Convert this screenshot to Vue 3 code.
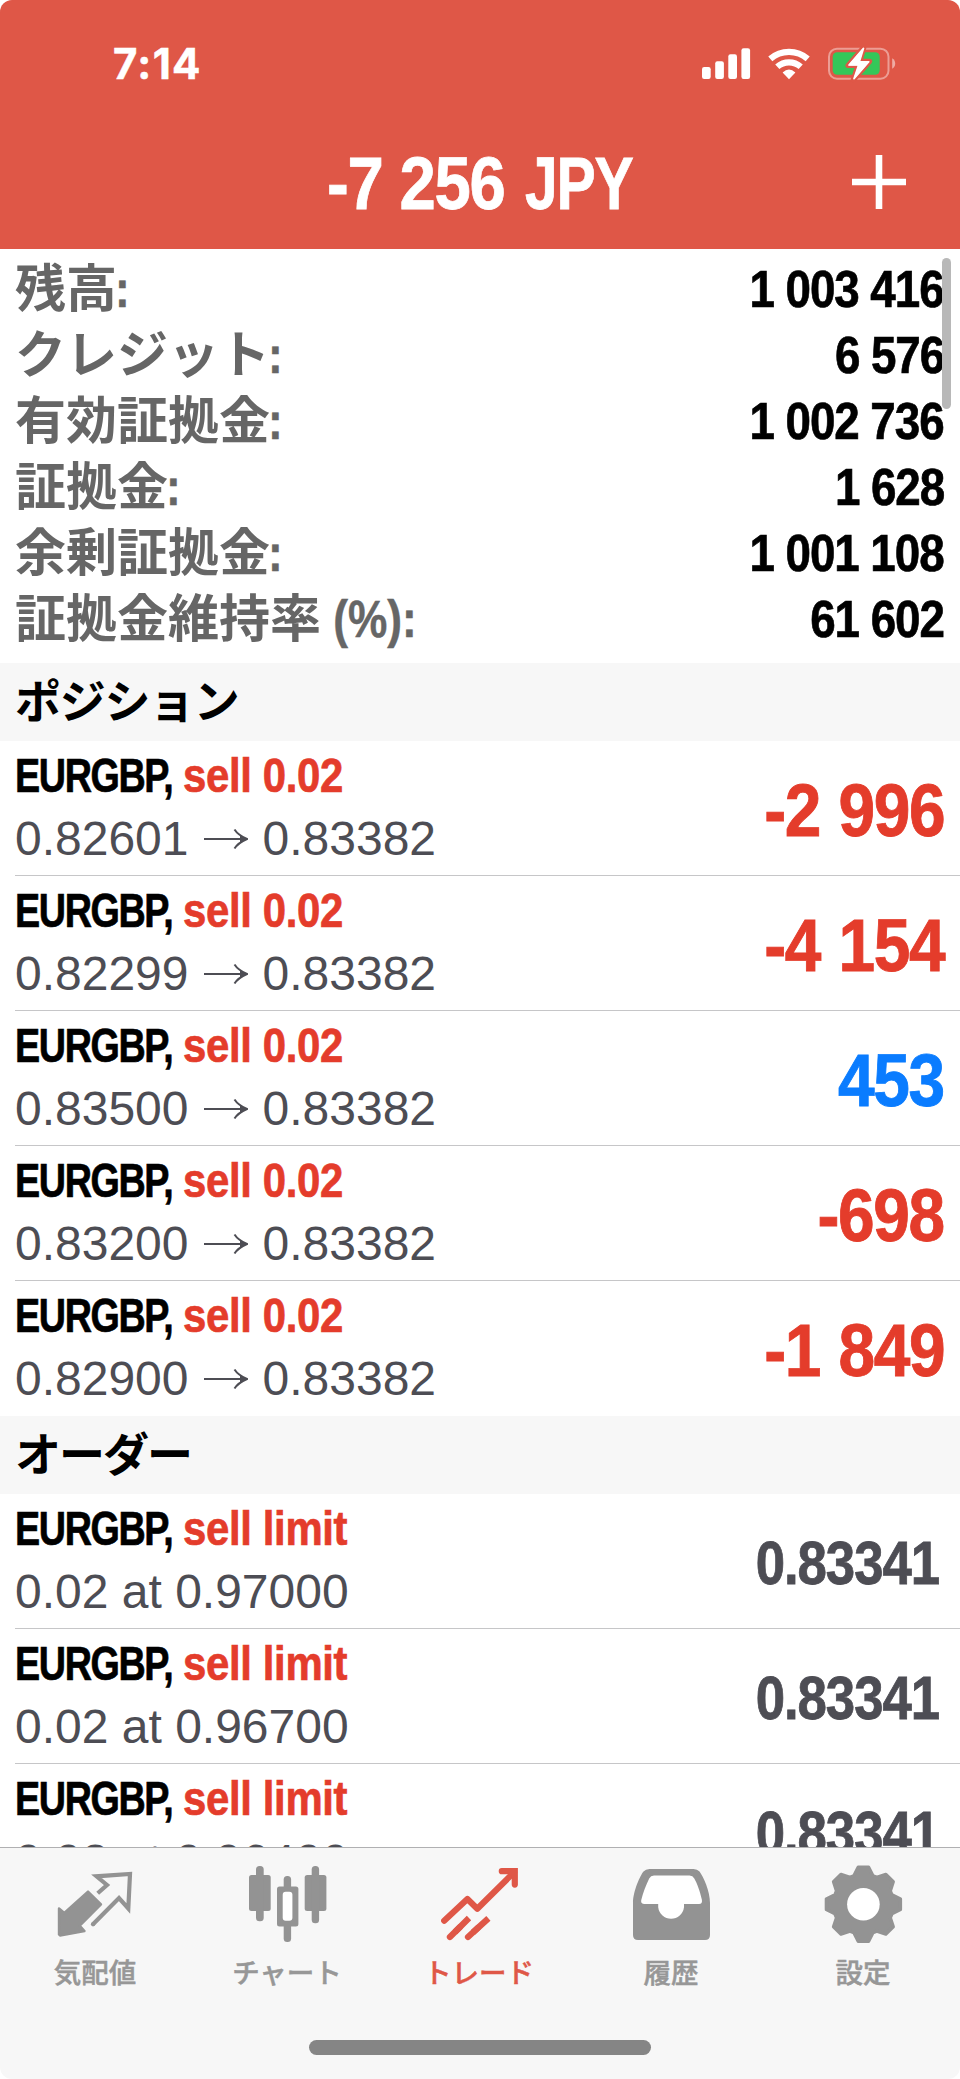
<script setup>
const account = [
  { label: '残高', value: '1 003 416' },
  { label: 'クレジット', value: '6 576' },
  { label: '有効証拠金', value: '1 002 736' },
  { label: '証拠金', value: '1 628' },
  { label: '余剰証拠金', value: '1 001 108' },
  { label: '証拠金維持率', unit: ' (%)', value: '61 602' },
]

const positions = [
  { open: '0.82601', now: '0.83382', profit: '-2 996' },
  { open: '0.82299', now: '0.83382', profit: '-4 154' },
  { open: '0.83500', now: '0.83382', profit: '453' },
  { open: '0.83200', now: '0.83382', profit: '-698' },
  { open: '0.82900', now: '0.83382', profit: '-1 849' },
]

const orders = [
  { at: '0.97000', price: '0.83341' },
  { at: '0.96700', price: '0.83341' },
  { at: '0.96400', price: '0.83341' },
]

// Eight-toothed gear outline around (0, 0)
const tooth = [[-9.5, -28.5], [-5.2, -37], [5.2, -37], [9.5, -28.5]]
const gear = Array.from({ length: 8 }, (_, i) => {
  const a = (i * Math.PI) / 4
  return tooth
    .map(([x, y]) => `${(x * Math.cos(a) - y * Math.sin(a)).toFixed(2)},${(x * Math.sin(a) + y * Math.cos(a)).toFixed(2)}`)
    .join(' ')
}).join(' ')
</script>

<template>
  <div class="screen">
    <header class="top">
      <div class="status">
        <span class="time">7:14</span>
        <svg class="indicators" width="200" height="40" viewBox="700 44 200 40">
          <g fill="#fff">
            <rect x="702" y="67" width="8.7" height="12" rx="2.2" />
            <rect x="715.2" y="61.3" width="8.7" height="17.7" rx="2.2" />
            <rect x="728.3" y="54.3" width="8.7" height="24.7" rx="2.2" />
            <rect x="741.4" y="48.3" width="8.7" height="30.7" rx="2.2" />
            <path d="M789 79.2L782.6 72.6Q789 66.6 795.4 72.6Z" />
          </g>
          <g fill="none" stroke="#fff" stroke-width="6.2">
            <path d="M770.3 58.8A28.5 28.5 0 0 1 807.7 58.8" />
            <path d="M777.3 66.8A17.5 17.5 0 0 1 800.7 66.8" />
          </g>
          <rect x="829" y="48.7" width="59.5" height="30" rx="8" fill="none" stroke="#fff" stroke-opacity=".42" stroke-width="2" />
          <rect x="832.7" y="52.3" width="47" height="22.4" rx="4.5" fill="#34c759" />
          <path d="M892.2 58.2Q895.2 60 895.2 63.5T892.2 68.8Z" fill="#fff" fill-opacity=".5" />
          <path d="M863.7 47.6L848.2 65.4H858.2L853.4 79.8L869.4 61.4H859.6Z" fill="#fff" stroke="#df5747" stroke-width="5.4" stroke-linejoin="round" paint-order="stroke" />
          <path d="M863.5 48.4L849 65H858.6L854 78.6L868.8 61.8H859.4Z" fill="#fff" stroke="#fff" stroke-width="1.6" stroke-linejoin="round" />
        </svg>
      </div>
      <div class="nav">
        <h1 class="title"><span class="sum">-7 256</span><span class="currency">JPY</span></h1>
        <svg class="plus" width="54" height="54" viewBox="0 0 54 54">
          <path d="M27 0V54M0 27H54" stroke="#fff" stroke-width="6.6" />
        </svg>
      </div>
    </header>

    <main class="content">
      <dl class="account">
        <div v-for="a in account" :key="a.label" class="account-row">
          <dt><span class="jp">{{ a.label }}</span><span class="tail" :class="{ wide: a.unit }">{{ a.unit }}:</span></dt>
          <dd>{{ a.value }}</dd>
        </div>
      </dl>

      <h2 class="section">ポジション</h2>
      <ul class="rows">
        <li v-for="p in positions" :key="p.open" class="row">
          <div class="info">
            <div class="line1"><span class="sym"><b>EURGBP,</b></span><span class="act">sell 0.02</span></div>
            <div class="line2">
              <span>{{ p.open }}</span>
              <svg class="arrow" width="44" height="22" viewBox="0 0 44 22">
                <path d="M0 11H40" stroke="#4d4d54" stroke-width="2" fill="none" />
                <path d="M30.5 1.5Q34 7 43 11Q34 15 30.5 20.5" stroke="#4d4d54" stroke-width="2" fill="none" />
                <path d="M36 7.5L43.4 11L36 14.5Z" fill="#4d4d54" />
              </svg>
              <span>{{ p.now }}</span>
            </div>
          </div>
          <div class="profit" :class="{ gain: !p.profit.startsWith('-') }">{{ p.profit }}</div>
        </li>
      </ul>

      <h2 class="section orders">オーダー</h2>
      <ul class="rows">
        <li v-for="o in orders" :key="o.at" class="row">
          <div class="info">
            <div class="line1"><span class="sym"><b>EURGBP,</b></span><span class="act">sell limit</span></div>
            <div class="line2">0.02 at {{ o.at }}</div>
          </div>
          <div class="price">{{ o.price }}</div>
        </li>
      </ul>
      <div class="scrollbar"></div>
    </main>

    <footer class="bottom">
      <nav class="tabs">
        <a class="tab">
          <svg width="80" height="84" viewBox="56 1862 80 84">
            <path d="M97.7 1893.3L107 1885L96.5 1876.3L130 1874L128.3 1908.5L119 1898L92.5 1924.8" fill="none" stroke="#939393" stroke-width="4.2" stroke-linejoin="miter" />
            <circle cx="93" cy="1924.3" r="2.1" fill="#939393" />
            <path d="M59 1908.5L64.3 1913L88 1891.6L101 1904.3L79.8 1925.7L84.5 1931L60 1935.5L59 1934.5Z" fill="#939393" stroke="#939393" stroke-width="2.4" stroke-linejoin="round" />
          </svg>
          <span>気配値</span>
        </a>
        <a class="tab">
          <svg width="80" height="84" viewBox="248 1862 80 84">
            <g fill="#939393">
              <rect x="249" y="1875" width="21.7" height="36" rx="2.5" />
              <rect x="256" y="1866" width="7.7" height="55.3" rx="3.5" />
              <rect x="283.7" y="1876" width="7.4" height="66" rx="3.5" />
              <rect x="277" y="1886.5" width="21.4" height="40" rx="2.5" />
              <rect x="304.7" y="1875" width="21.7" height="36" rx="2.5" />
              <rect x="311.7" y="1866" width="7.4" height="57.3" rx="3.5" />
            </g>
            <rect x="282.7" y="1891.8" width="9.7" height="29" rx="3" fill="#fff" />
          </svg>
          <span>チャート</span>
        </a>
        <a class="tab active">
          <svg width="80" height="84" viewBox="440 1862 80 84">
            <g fill="none" stroke="#df5747" stroke-width="6.2" stroke-linecap="round">
              <path d="M444.2 1920.7L467.4 1899L477.3 1908.7L514 1872.3" stroke-linejoin="round" />
              <path d="M501.8 1871.2H514.8V1884.6" />
              <path d="M449.9 1937L460 1927M468 1937L478 1927.8" />
            </g>
            <g fill="none" stroke="#df5747" stroke-width="6.2">
              <path d="M455 1932L469 1918M473 1932.4L488.4 1918.4" />
            </g>
            <path d="M507 1872H514V1879Z" fill="#df5747" />
          </svg>
          <span>トレード</span>
        </a>
        <a class="tab">
          <svg width="80" height="84" viewBox="632 1862 80 84">
            <path d="M633 1935V1903C633 1891 640.5 1875 643.5 1871.5Q645.6 1869 649.5 1869H693.5Q697.4 1869 699.5 1871.5C703.5 1877 710 1891 710 1903V1935Q710 1940 705 1940H638Q633 1940 633 1935Z" fill="#939393" />
            <path d="M654 1875.6H689.5Q692.8 1875.6 694.3 1878.4C697 1883 700 1891 701.9 1899.8Q702.6 1904 699 1904H684V1907.3A13 13 0 0 1 658.2 1907.3V1904H644.5Q640.6 1904 641.2 1900.2C643 1892.5 646.2 1884.5 649.2 1878.4Q650.7 1875.6 654 1875.6Z" fill="#fff" />
          </svg>
          <span>履歴</span>
        </a>
        <a class="tab">
          <svg width="80" height="84" viewBox="824 1862 80 84">
            <g transform="translate(863.4 1904.3)">
              <polygon :points="gear" fill="#939393" stroke="#939393" stroke-width="3.4" stroke-linejoin="round" />
              <circle r="16.3" fill="#fff" />
            </g>
          </svg>
          <span>設定</span>
        </a>
      </nav>
      <div class="home"></div>
    </footer>
  </div>
</template>

<style>
body {
  margin: 0;
  background: #fff;
}
</style>

<style scoped>
.screen {
  display: flex;
  flex-direction: column;
  width: 960px;
  height: 2079px;
  overflow: hidden;
  border-radius: 12px;
  background: #fff;
  font-family: "Liberation Sans", "Noto Sans CJK JP", sans-serif;
  white-space: nowrap;
}
h1, h2, ul, dl, dd {
  margin: 0;
  padding: 0;
  list-style: none;
}
.top {
  flex: none;
  height: 249px;
  background: #df5747;
  color: #fff;
}
.status {
  display: flex;
  justify-content: space-between;
  align-items: center;
  box-sizing: border-box;
  height: 117px;
  padding: 11px 60px 0 113px;
}
.time {
  font: 700 42px/50px Inter, sans-serif;
  letter-spacing: 1.3px;
  -webkit-text-stroke: 0.5px currentColor;
}
.nav {
  display: grid;
  grid-template-columns: 327px 1fr 160px;
  align-items: center;
  height: 132px;
}
.title {
  display: flex;
  grid-column: 2;
  font-size: 74px;
  line-height: 133px;
  -webkit-text-stroke: 0.8px currentColor;
}
.sum {
  width: 198px;
  letter-spacing: -1.4px;
  transform: scaleX(0.882);
  transform-origin: left;
}
.currency {
  letter-spacing: -1.5px;
  transform: scaleX(0.795);
  transform-origin: left;
}
.plus {
  justify-self: end;
  margin: -4px 54px 0 0;
}
.content {
  position: relative;
  flex: 1;
  min-height: 0;
  overflow: hidden;
}
.account {
  height: 396px;
  padding: 7px 16px 11px 15px;
}
.account-row {
  display: flex;
  justify-content: space-between;
  height: 66px;
  font-size: 52px;
  font-weight: 700;
  line-height: 66px;
}
.account dt {
  display: flex;
  color: #666;
}
.jp {
  font-family: "Noto Sans CJK JP", sans-serif;
  font-size: 51px;
  line-height: 59px;
}
.tail {
  margin-left: -2px;
  white-space: pre;
  transform: scaleX(0.85);
  transform-origin: left;
  -webkit-text-stroke: 0.5px currentColor;
}
.wide {
  margin-left: 0;
}
.account dd {
  letter-spacing: -1.2px;
  transform: scaleX(0.88);
  transform-origin: right;
  -webkit-text-stroke: 0.7px currentColor;
}
.section {
  height: 78px;
  padding-left: 15px;
  background: #f7f7f7;
  font: 700 46px/70px "Noto Sans CJK JP", sans-serif;
  letter-spacing: -1.3px;
}
.orders {
  letter-spacing: -2px;
}
.row {
  display: flex;
  justify-content: space-between;
  position: relative;
  height: 135px;
  padding: 0 15px;
}
.row:not(:last-child)::after {
  content: "";
  position: absolute;
  left: 15px;
  right: 0;
  bottom: 0;
  height: 1px;
  background: #c6c6c8;
}
.line1 {
  display: flex;
  height: 68px;
  font-size: 49px;
  font-weight: 700;
  line-height: 68px;
  -webkit-text-stroke: 0.7px currentColor;
}
.sym {
  width: 168px;
}
.sym b {
  display: inline-block;
  letter-spacing: -1.8px;
  transform: scaleX(0.77);
  transform-origin: left;
}
.act {
  color: #e43c2b;
  letter-spacing: -0.4px;
  transform: scaleX(0.855);
  transform-origin: left;
}
.line2 {
  display: flex;
  align-items: center;
  height: 59px;
  color: #4d4d54;
  font-size: 48px;
  line-height: 59px;
  white-space: pre;
}
.arrow {
  margin: 0 15px 0 15px;
}
.profit {
  margin-right: 1px;
  color: #e43c2b;
  font-size: 74px;
  font-weight: 700;
  letter-spacing: -1.6px;
  line-height: 139px;
  word-spacing: 2px;
  transform: scaleX(0.89);
  transform-origin: right;
  -webkit-text-stroke: 0.9px currentColor;
}
.gain {
  color: #0a7cff;
}
.price {
  margin-right: 6px;
  color: #4d4d54;
  font-size: 61px;
  font-weight: 700;
  letter-spacing: -1.2px;
  line-height: 138px;
  transform: scaleX(0.865);
  transform-origin: right;
  -webkit-text-stroke: 0.8px currentColor;
}
.scrollbar {
  position: absolute;
  top: 9px;
  right: 9px;
  width: 9px;
  height: 151px;
  border-radius: 4.5px;
  background: #b8b8b8;
}
.bottom {
  box-sizing: border-box;
  flex: none;
  height: 232px;
  border-top: 1px solid #b0b0b2;
  background: #f7f7f7;
}
.tabs {
  display: grid;
  grid-template-columns: repeat(5, 192px);
  height: 192px;
}
.tab {
  display: flex;
  flex-direction: column;
  align-items: center;
  padding-top: 14px;
  color: #979797;
  font: 500 27.5px/40px "Noto Sans CJK JP", sans-serif;
  -webkit-text-stroke: 0.5px currentColor;
}
.tab span {
  margin: 5px 2px 0 0;
}
.active {
  color: #df5747;
}
.home {
  width: 342px;
  height: 15px;
  margin: 0 auto;
  border-radius: 7.5px;
  background: #858585;
}
</style>
